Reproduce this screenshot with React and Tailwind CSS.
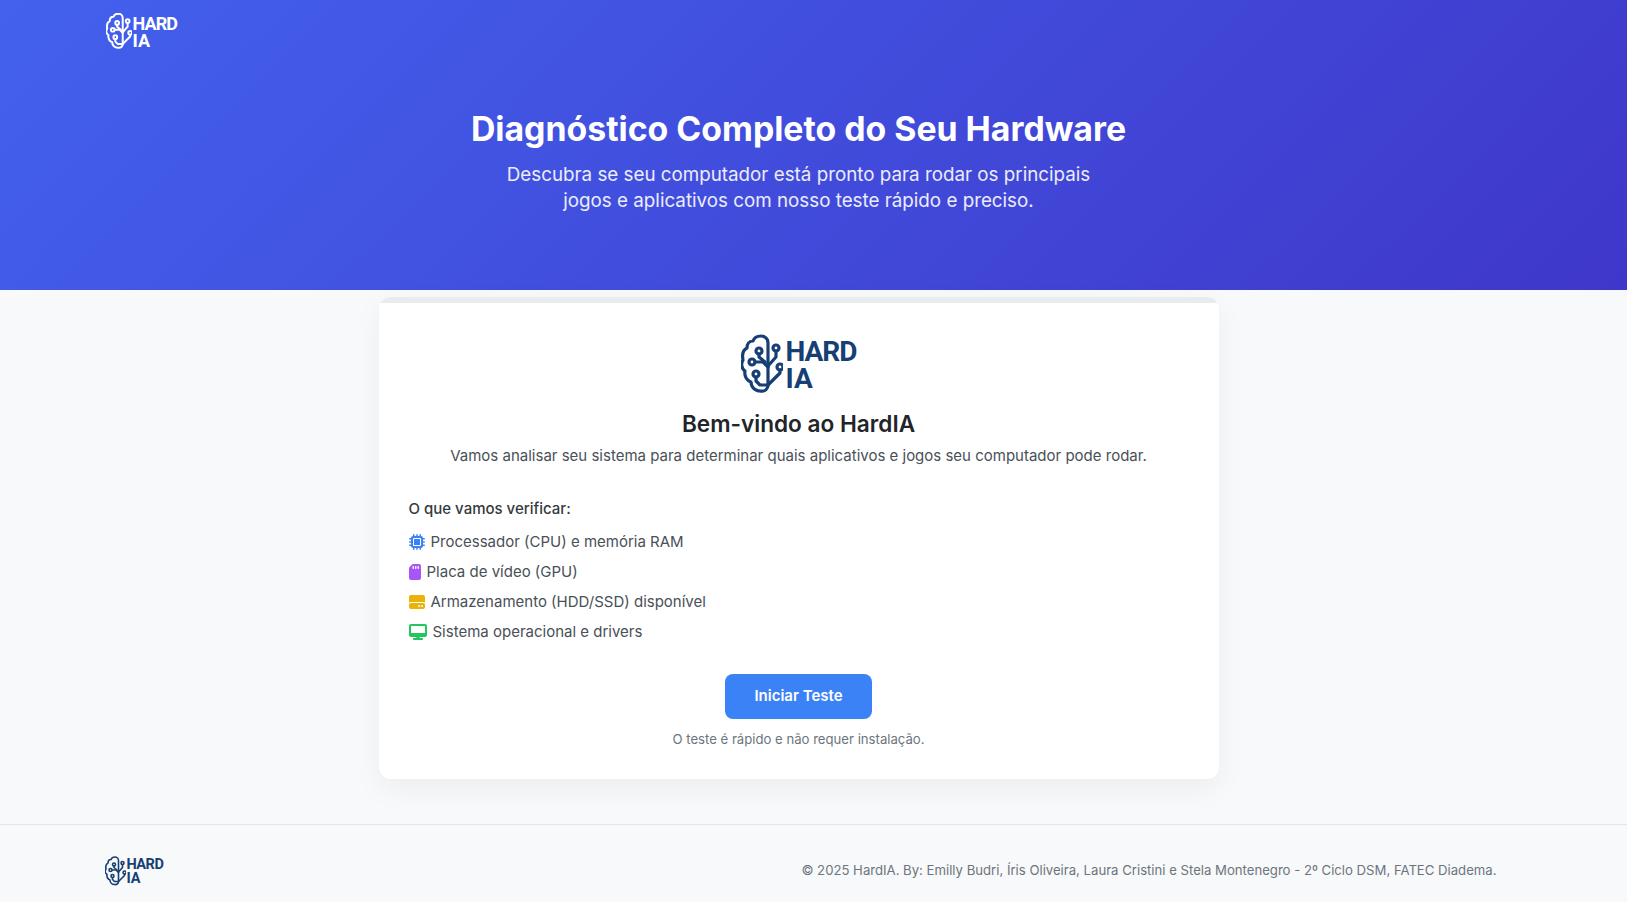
import { FaMicrochip, FaSdCard, FaHardDrive, FaDesktop } from 'react-icons/fa6'

const CHECKS = [
  { label: 'Processador (CPU) e memória RAM', icon: FaMicrochip, tone: 'w-[16px] text-[#3b82f6]' },
  { label: 'Placa de vídeo (GPU)', icon: FaSdCard, tone: 'w-[12px] text-[#a855f7]' },
  { label: 'Armazenamento (HDD/SSD) disponível', icon: FaHardDrive, tone: 'w-[16px] text-[#eab308]' },
  { label: 'Sistema operacional e drivers', icon: FaDesktop, tone: 'w-[18px] text-[#22c55e]' },
]

function BrainMark({ className }) {
  return (
    <svg viewBox="0 0 42 58" fill="none" stroke="currentColor" strokeWidth="3.2" strokeLinecap="round" strokeLinejoin="round" className={className}>
      {/* outline */}
      <path d="M27 8C27 3 23 1 20 1 16 1 13 3 12 6 8 6 6 9 6 13 2 15 1 20 2 25 0 28 0 33 4 36 3 41 6 46 10 47 10 52 14 56 19 56 24 57 27 54 27 50V8" />
      {/* traces */}
      <circle cx="18" cy="16" r="3" />
      <path d="M18 19v3l6 5" />
      <circle cx="11" cy="27" r="3" />
      <path d="M14 27h8l5 5" />
      <circle cx="15" cy="39" r="3" />
      <path d="M15 42v4l4 4h8" />
      <circle cx="35" cy="13" r="3" />
      <path d="M35 16v6l-8 9" />
      <circle cx="39" cy="32" r="3" />
      <path d="M39 35v3L27 50" />
    </svg>
  )
}

function Logo({ mark, text, gap, tone }) {
  return (
    <div className={`flex items-center ${tone} ${gap}`}>
      <BrainMark className={mark} />
      <div className={`font-['Roboto',sans-serif] font-bold pt-[2px] ${text}`}>
        <div>HARD</div>
        <div className="tracking-normal">IA</div>
      </div>
    </div>
  )
}

export default function App() {
  return (
    <div className="min-h-[902px] bg-[#f8f9fa] flex flex-col font-['Inter',sans-serif]">

      {/* Hero */}
      <header className="h-[290px] bg-[linear-gradient(135deg,#4361ee,#3f37c9)] text-white pr-[30px] shrink-0">
        <div className="max-w-[1400px] mx-auto pl-[7px] pt-[13px]">
          <Logo mark="w-[26px] h-[36px]" text="text-[18px] leading-[17px] tracking-[-0.9px]" gap="gap-[1px]" tone="text-white" />
        </div>
        <div className="text-center mt-[59px]">
          <h1 className="text-[33.8px] leading-[42px] font-bold">Diagnóstico Completo do Seu Hardware</h1>
          <p className="text-[18.8px] leading-[26px] mt-[12px] text-white/90">
            Descubra se seu computador está pronto para rodar os principais
            <br />
            jogos e aplicativos com nosso teste rápido e preciso.
          </p>
        </div>
      </header>

      {/* Card */}
      <main className="flex-1 pr-[30px] pt-[7px]">
        <div className="w-[840px] h-[482px] mx-auto bg-white rounded-[12px] overflow-hidden shadow-[0_10px_30px_rgba(0,0,0,0.05)]">
          <div className="h-[6px] bg-[#e9ecef]" />
          <div className="px-[30px] pt-[31px]">
            <div className="flex justify-center">
              <Logo mark="w-[42px] h-[60px]" text="text-[28px] leading-[27px] tracking-[-1px]" gap="gap-[3px]" tone="text-[#173f74]" />
            </div>
            <h2 className="text-center text-[22.6px] leading-[27px] font-semibold text-[#212529] mt-[16px]">Bem-vindo ao HardIA</h2>
            <p className="text-center text-[15px] leading-[24px] text-[#495057] mt-[7px]">
              Vamos analisar seu sistema para determinar quais aplicativos e jogos seu computador pode rodar.
            </p>

            <h3 className="text-[15px] leading-[24px] font-medium text-[#343a40] mt-[29px]">O que vamos verificar:</h3>
            <ul className="mt-[6px]">
              {CHECKS.map(item => {
                const Icon = item.icon
                return (
                  <li key={item.label} className="flex items-center gap-[6px] h-[30px] text-[15px] text-[#495057]">
                    <Icon className={`h-[16px] shrink-0 ${item.tone}`} />
                    <span>{item.label}</span>
                  </li>
                )
              })}
            </ul>

            <div className="flex justify-center mt-[27px]">
              <button className="w-[147px] h-[45px] rounded-[8px] bg-[#3b82f6] text-white text-[15px] font-semibold">Iniciar Teste</button>
            </div>
            <p className="text-center text-[13.15px] leading-[20px] text-[#6c757d] mt-[10px]">O teste é rápido e não requer instalação.</p>
          </div>
        </div>
      </main>

      {/* Footer */}
      <footer className="h-[78px] border-t border-[#e2e5e9] bg-[#f8f9fa] pr-[30px] shrink-0">
        <div className="max-w-[1400px] h-full mx-auto flex items-center justify-between pl-[6px] pr-[2px] pt-[14px]">
          <Logo mark="w-[21px] h-[30px]" text="text-[14.5px] leading-[14px] tracking-[-0.5px]" gap="gap-[1px]" tone="text-[#173f74]" />
          <p className="text-[13.15px] text-[#6c757d]">© 2025 HardIA. By: Emilly Budri, Íris Oliveira, Laura Cristini e Stela Montenegro - 2º Ciclo DSM, FATEC Diadema.</p>
        </div>
      </footer>
    </div>
  )
}
